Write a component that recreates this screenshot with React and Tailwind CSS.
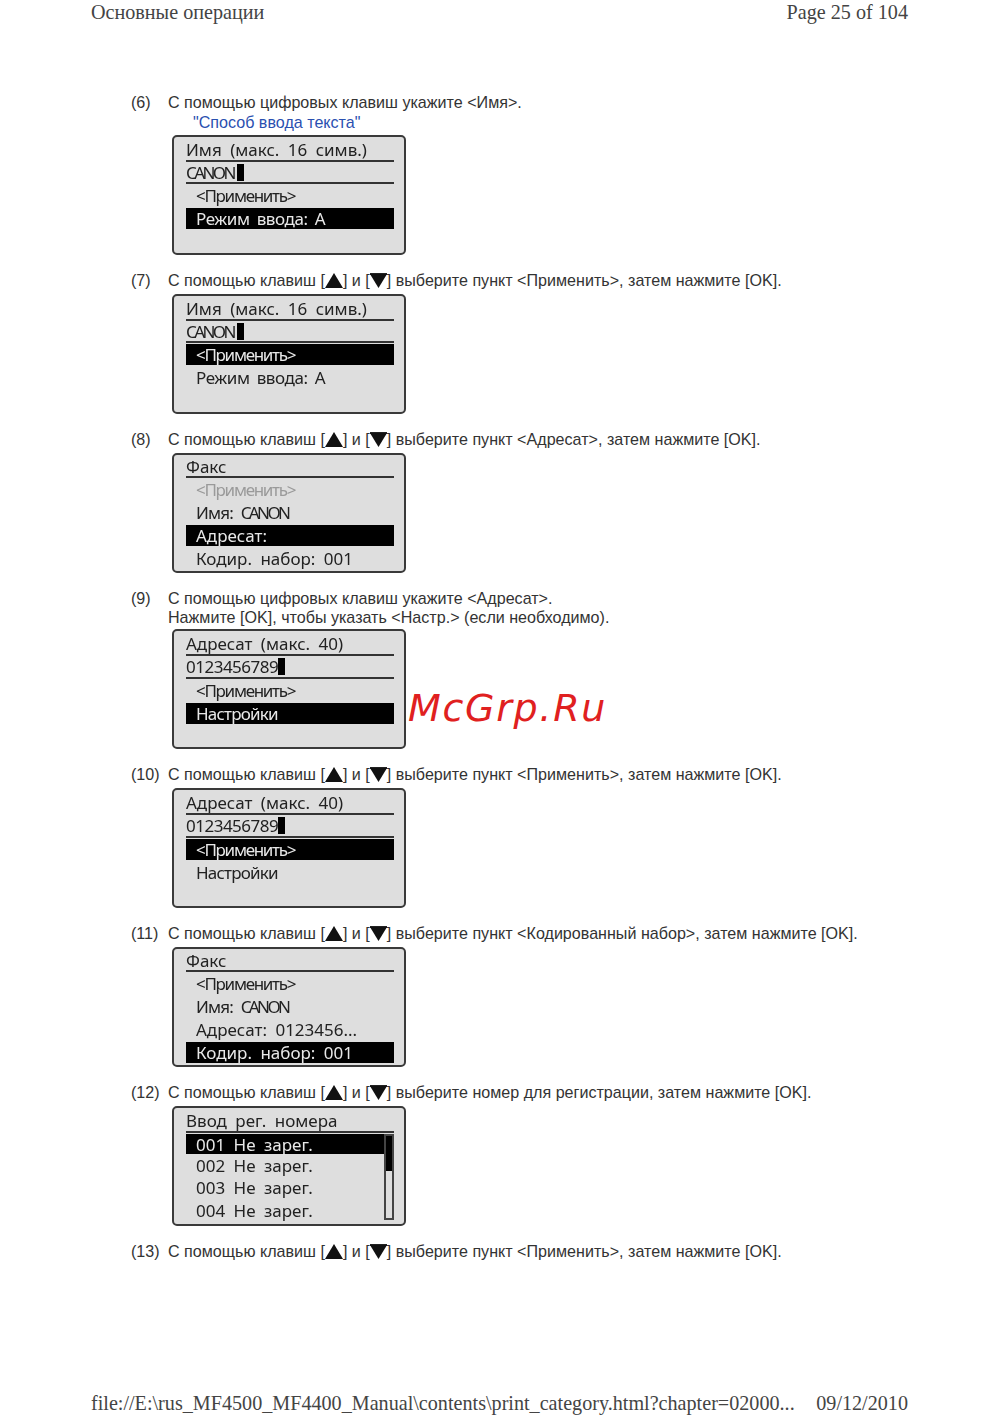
import React from 'react'

const UpKey = () => (
  <svg viewBox="0 0 18 15" className="inline-block w-[18px] h-[15px] align-[-2px]">
    <path d="M9 0 L18 15 H0 Z" fill="#111" />
  </svg>
)

const DownKey = () => (
  <svg viewBox="0 0 17 15" className="inline-block w-[17px] h-[15px] align-[-2px]">
    <rect x="0" y="0" width="17" height="2" fill="#222" />
    <path d="M0 1 H17 L8.5 15 Z" fill="#111" />
  </svg>
)

const Keys = () => (
  <>
    С помощью клавиш [<UpKey />] и [<DownKey />]
  </>
)

const Row = ({ text, kind }) => {
  if (kind === 'selected') {
    return (
      <div className="h-[21px] my-[1px] bg-black text-[#e8e8e8] pl-[10px] flex items-center whitespace-pre">{text}</div>
    )
  }
  if (kind === 'listSelected') {
    return (
      <div className="h-[20px] mt-[1px] bg-black text-[#e8e8e8] pl-[10px] flex items-center whitespace-pre">{text}</div>
    )
  }
  if (kind === 'list') {
    return <div className="h-[22.5px] pl-[10px] flex items-center whitespace-pre">{text}</div>
  }
  return (
    <div className={`h-[23px] pl-[10px] flex items-center whitespace-pre ${kind === 'dim' ? 'text-[#9a9a9a]' : ''}`}>{text}</div>
  )
}

const Ruled = ({ children, first }) => (
  <div className={`${first ? 'h-[23px]' : 'h-[22px]'} border-b-2 border-[#333] flex items-center whitespace-pre`}>{children}</div>
)

const Cursor = () => <span className="inline-block w-[7px] h-[17px] bg-black" />

const Canon = () => <span className="tracking-[-2.6px] mr-[3px]">CANON</span>

const Apply = () => <span className="tracking-[-1.3px]">&lt;Применить&gt;</span>

const Digits = () => <span className="tracking-[-0.5px]">0123456789</span>

const Setup = () => <span className="tracking-[-0.8px]">Настройки</span>

const Mode = () => <span className="tracking-[-0.4px] [word-spacing:3px]">Режим ввода: A</span>

const NameCanon = () => (
  <>
    <span className="tracking-[-0.8px]">Имя: </span>
    <Canon />
  </>
)

const Screen = ({ children, tight, className = 'mt-[4px]' }) => (
  <div className={`${className} ${tight ? 'pt-[1px]' : 'pt-[2px]'} ml-[41px] w-[234px] h-[120px] bg-[#dedede] border-2 border-[#3a3a3a] rounded-[5px] pl-[12px] pr-[10px] text-[17px] leading-none text-[#222] [word-spacing:4px] font-['Noto_Sans',sans-serif] blur-[0.3px] overflow-hidden`}>
    {children}
  </div>
)

const Step = ({ n, children, className = 'mt-[16px]' }) => (
  <div className={`flex leading-[19px] ${className}`}>
    <div className="w-[37px] shrink-0">({n})</div>
    <div>{children}</div>
  </div>
)

export default function App() {
  return (
    <div className="relative h-[1415px] bg-white flex flex-col font-['Liberation_Sans',sans-serif] text-[16.1px] text-[#333]">
      <header className="flex justify-between pl-[91px] pr-[92px] h-[24px] font-['Liberation_Serif',serif] text-[20.15px] leading-[24px] text-[#444]">
        <span>Основные операции</span>
        <span>Page 25 of 104</span>
      </header>

      <main className="pl-[131px] pt-[69px] flex flex-col">
        <Step n="6" className="">С помощью цифровых клавиш укажите &lt;Имя&gt;.</Step>
        <div className="pl-[62px] leading-[19px] mt-[1px] text-[#2a50b0]">"Способ ввода текста"</div>
        <Screen className="mt-[3px]">
          <Ruled first>Имя (макс. 16 симв.)</Ruled>
          <Ruled><Canon /><Cursor /></Ruled>
          <Row text={<Apply />} />
          <Row text={<Mode />} kind="selected" />
        </Screen>

        <Step n="7"><Keys /> выберите пункт &lt;Применить&gt;, затем нажмите [OK].</Step>
        <Screen>
          <Ruled first>Имя (макс. 16 симв.)</Ruled>
          <Ruled><Canon /><Cursor /></Ruled>
          <Row text={<Apply />} kind="selected" />
          <Row text={<Mode />} />
        </Screen>

        <Step n="8"><Keys /> выберите пункт &lt;Адресат&gt;, затем нажмите [OK].</Step>
        <Screen tight>
          <Ruled>Факс</Ruled>
          <Row text={<Apply />} kind="dim" />
          <Row text={<NameCanon />} />
          <Row text="Адресат:" kind="selected" />
          <Row text="Кодир. набор: 001" />
        </Screen>

        <Step n="9">
          С помощью цифровых клавиш укажите &lt;Адресат&gt;.<br />
          Нажмите [OK], чтобы указать &lt;Настр.&gt; (если необходимо).
        </Step>
        <Screen className="mt-[2px]">
          <Ruled first>Адресат (макс. 40)</Ruled>
          <Ruled first><Digits /><Cursor /></Ruled>
          <Row text={<Apply />} />
          <Row text={<Setup />} kind="selected" />
        </Screen>

        <Step n="10"><Keys /> выберите пункт &lt;Применить&gt;, затем нажмите [OK].</Step>
        <Screen>
          <Ruled first>Адресат (макс. 40)</Ruled>
          <Ruled first><Digits /><Cursor /></Ruled>
          <Row text={<Apply />} kind="selected" />
          <Row text={<Setup />} />
        </Screen>

        <Step n="11"><Keys /> выберите пункт &lt;Кодированный набор&gt;, затем нажмите [OK].</Step>
        <Screen tight>
          <Ruled>Факс</Ruled>
          <Row text={<Apply />} />
          <Row text={<NameCanon />} />
          <Row text="Адресат: 0123456..." />
          <Row text="Кодир. набор: 001" kind="selected" />
        </Screen>

        <Step n="12"><Keys /> выберите номер для регистрации, затем нажмите [OK].</Step>
        <Screen>
          <Ruled first>Ввод рег. номера</Ruled>
          <div className="flex">
            <div className="flex-1">
              <Row text="001 Не зарег." kind="listSelected" />
              <Row text="002 Не зарег." kind="list" />
              <Row text="003 Не зарег." kind="list" />
              <Row text="004 Не зарег." kind="list" />
            </div>
            <div className="w-[10px] h-[86px] mt-[1px] border-2 border-[#444]">
              <div className="h-[35px] bg-black" />
            </div>
          </div>
        </Screen>

        <Step n="13"><Keys /> выберите пункт &lt;Применить&gt;, затем нажмите [OK].</Step>
      </main>

      <footer className="mt-auto flex justify-between pl-[91px] pr-[92px] h-[24px] whitespace-nowrap font-['Liberation_Serif',serif] text-[20.15px] leading-[24px] text-[#444]">
        <span>file://E:\rus_MF4500_MF4400_Manual\contents\print_category.html?chapter=02000...</span>
        <span>09/12/2010</span>
      </footer>

      <div className="absolute left-[408px] top-[684px] font-['DejaVu_Sans',sans-serif] italic text-[38px] leading-[48px] tracking-[1.7px] text-[#e02020]">McGrp.Ru</div>
    </div>
  )
}
